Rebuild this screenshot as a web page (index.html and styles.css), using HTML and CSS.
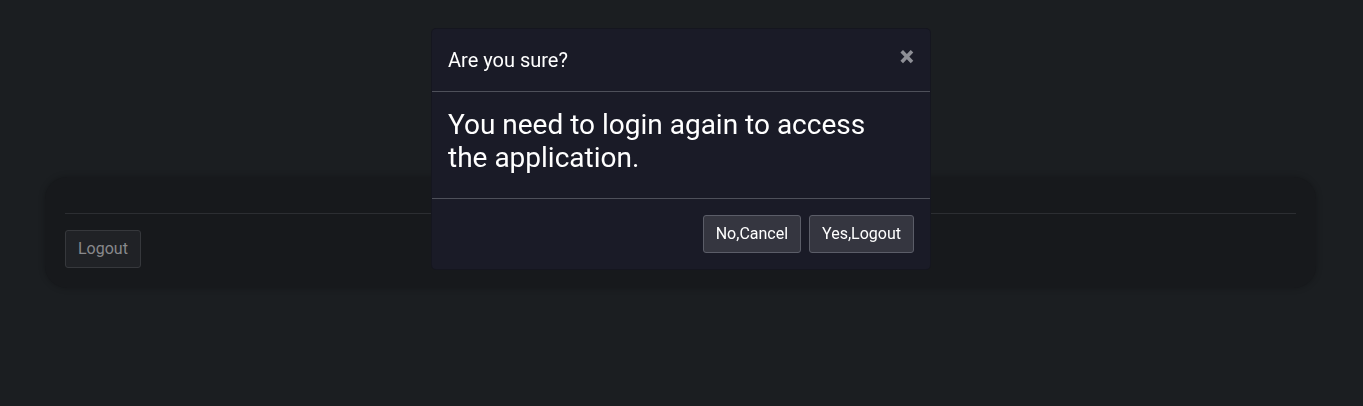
FILE: index.html
```html
<!DOCTYPE html>
<html>
<head>
<meta charset="utf-8">
<link rel="stylesheet" href="styles.css">
</head>
<body>
<main class="page">
  <section class="card">
    <div class="card-header"></div>
    <div class="card-body">
      <button class="btn-logout">Logout</button>
    </div>
  </section>
</main>
<div class="overlay">
  <div class="modal">
    <div class="modal-header">
      <h5 class="modal-title">Are you sure?</h5>
      <span class="close">&times;</span>
    </div>
    <div class="modal-body">
      <h3 class="modal-text">You need to login again to access the application.</h3>
    </div>
    <div class="modal-footer">
      <button class="btn">No,Cancel</button>
      <button class="btn">Yes,Logout</button>
    </div>
  </div>
</div>
</body>
</html>
```
FILE: styles.css
```css
* { box-sizing: border-box; }
html, body { margin: 0; height: 100%; }
body {
  background: #1b1e21;
  font-family: Roboto, "Liberation Sans", sans-serif;
  color: #fff;
}
.page {
  padding: 177px 47px 0 45px;
}
.card {
  background: #17191c;
  border-radius: 22px;
  box-shadow: 0 0 6px rgba(0,0,0,0.25);
  padding: 0 20px 20px;
}
.card-header {
  height: 37px;
  border-bottom: 1px solid #2c2e32;
}
.card-body {
  padding-top: 16px;
}
.btn-logout {
  font-family: inherit;
  font-size: 16px;
  line-height: 24px;
  padding: 6px 12px;
  color: #88898c;
  background: #202226;
  border: 1px solid #36383c;
  border-radius: 3px;
}
.overlay {
  position: fixed;
  inset: 0;
  display: flex;
  justify-content: center;
  align-items: flex-start;
  padding: 29px 1px 0 0;
}
.modal {
  width: 498px;
  background: #1a1b27;
  border-radius: 4px;
  box-shadow: 0 0 0 1px #15161f;
}
.modal-header {
  display: flex;
  justify-content: space-between;
  align-items: flex-start;
  padding: 16px 16px 16px;
  border-bottom: 1px solid #4e505a;
}
.modal-title {
  margin: 0;
  font-size: 20px;
  font-weight: 400;
  line-height: 30px;
  color: #fff;
}
.close {
  font-size: 27px;
  font-weight: 900;
  line-height: 24px;
  color: #8e8f96;
  margin-right: 0;
}
.modal-body {
  padding: 16px 16px 16px;
  border-bottom: 1px solid #4e505a;
}
.modal-text {
  max-width: 440px;
  margin: 0 0 8px;
  font-size: 28px;
  font-weight: 400;
  line-height: 33px;
  color: #fff;
}
.modal-footer {
  display: flex;
  justify-content: flex-end;
  gap: 8px;
  padding: 16px;
}
.btn {
  font-family: inherit;
  font-size: 16px;
  line-height: 24px;
  padding: 6px 12px;
  color: #fff;
  background: #353640;
  border: 1px solid #5b5d68;
  border-radius: 3px;
}
```
